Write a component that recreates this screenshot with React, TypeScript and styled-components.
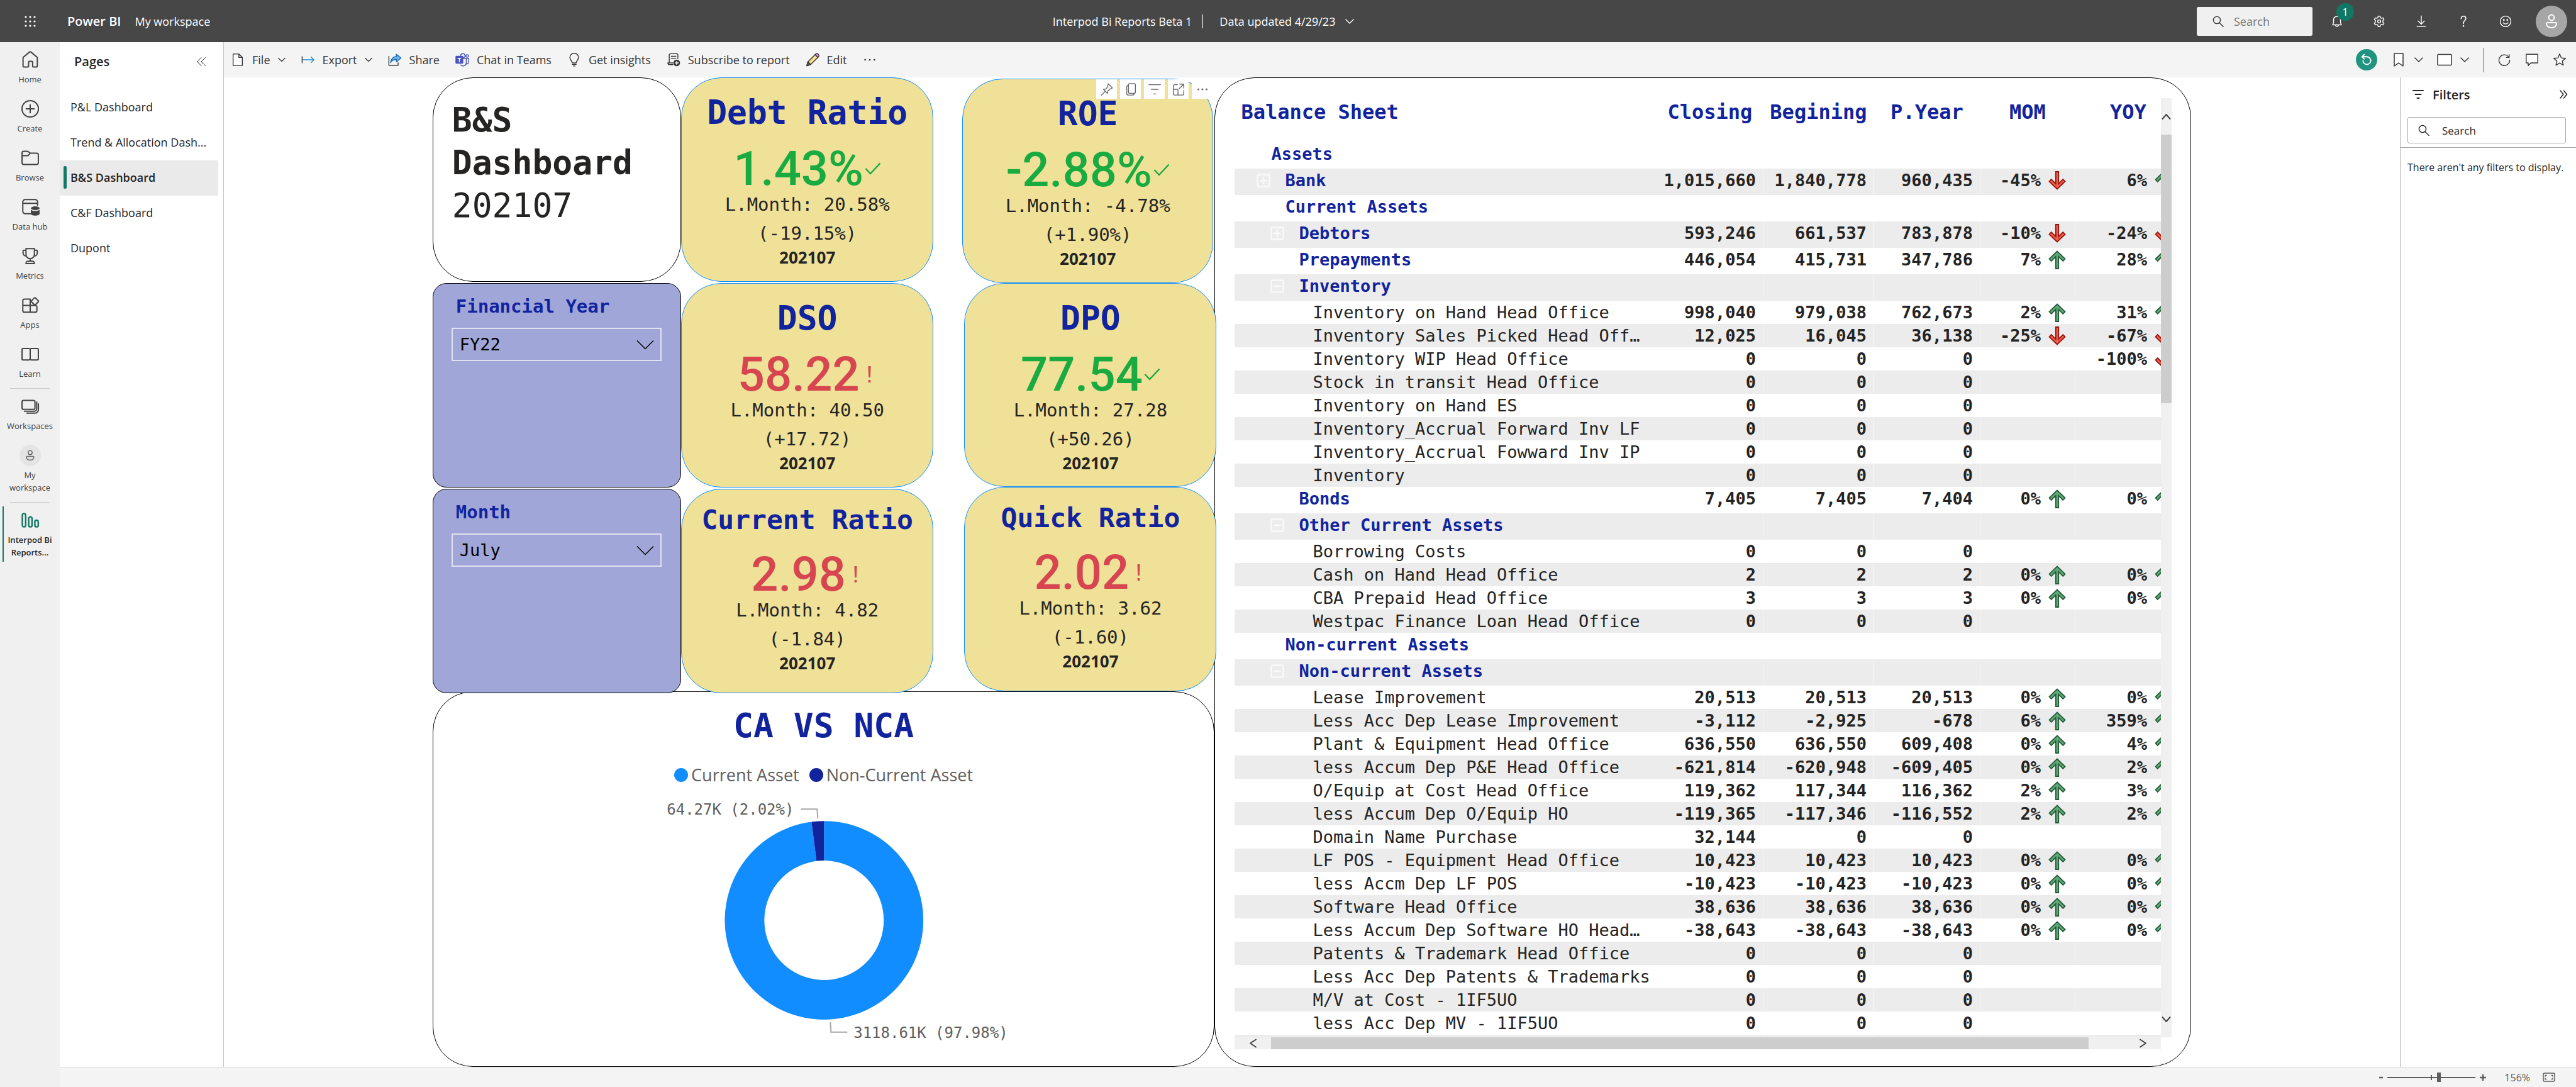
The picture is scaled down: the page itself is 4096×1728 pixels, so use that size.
import React from "react";
import styled, { createGlobalStyle, css } from "styled-components";

const ui = `"Open Sans", "Noto Sans", sans-serif`;
const mono = `"DejaVu Sans Mono", "Liberation Mono", monospace`;
const navy = "#12239e";
const ink = "#252423";
const green = "#1aab40";
const red = "#d64550";
const blue = "#118dff";

const GlobalStyle = createGlobalStyle`
  *, *::before, *::after { box-sizing: border-box; }
  html, body, #root { height: 100%; }
  body { margin: 0; overflow: hidden; background: #fff; color: ${ink}; font-family: ${ui}; font-size: 18px; }
  button, input, select { font: inherit; color: inherit; }
  button { border: 0; padding: 0; background: none; cursor: pointer; }
  a { color: inherit; text-decoration: none; }
  svg { display: block; flex: none; }
`;

/* ---------- icons ---------- */

type IconProps = {
  size?: number;
  width?: number;
  box?: string;
  stroke?: number;
  children: React.ReactNode;
};

const Icon = ({ size = 22, width, box = "0 0 24 24", stroke = 1.5, children }: IconProps) => (
  <svg
    width={width ?? size}
    height={size}
    viewBox={box}
    fill="none"
    stroke="currentColor"
    strokeWidth={stroke}
    strokeLinecap="round"
    strokeLinejoin="round"
    aria-hidden="true"
  >
    {children}
  </svg>
);

const ChevronDown = ({ size = 12, stroke = 1.2 }: { size?: number; stroke?: number }) => (
  <Icon size={size} box="0 0 12 12" stroke={stroke}>
    <path d="M.8 3.5 6 8.5l5.2-5" />
  </Icon>
);

const SearchIcon = () => (
  <Icon size={18} box="0 0 18 18" stroke={1.4}>
    <circle cx="7" cy="7" r="5.6" />
    <path d="m11 11.2 6 6" />
  </Icon>
);

const Person = ({ size = 30 }: { size?: number }) => (
  <Icon size={size} box="0 0 30 30" stroke={2}>
    <circle cx="15" cy="9" r="4.4" />
    <path d="M8.5 17h13a1.6 1.6 0 0 1 1.6 1.7c-.4 4-3.8 6.3-8.1 6.3s-7.7-2.3-8.1-6.3A1.6 1.6 0 0 1 8.5 17Z" />
  </Icon>
);

const railIcons = {
  home: (
    <Icon size={32}>
      <path d="M3.5 9.9a1.5 1.5 0 0 1 .5-1.1l7-5.9a1.5 1.5 0 0 1 2 0l7 5.900a1.5 1.5 0 0 1 .5 1.100v9.700a1 1 0 0 1-1 1h-3.600a1 1 0 0 1-1-1v-4.800a1 1 0 0 0-1-1h-2.800a1 1 0 0 0-1 1v4.800a1 1 0 0 1-1 1H4.500a1 1 0 0 1-1-1Z" />
    </Icon>
  ),
  create: (
    <Icon size={32}>
      <circle cx="12" cy="12" r="9.8" />
      <path d="M12 7.3v9.400M7.300 12h9.400" />
    </Icon>
  ),
  browse: (
    <Icon size={32}>
      <path d="M2.3 6.2a2 2 0 0 1 2-2h4.200c.5 0 1 .2 1.400.5l2.100 1.700h7.700a2 2 0 0 1 2 2v9.400a2 2 0 0 1-2 2H4.300a2 2 0 0 1-2-2ZM2.300 9.400h6.200c.5 0 1-.2 1.400-.5L12 6.500" />
    </Icon>
  ),
  hub: (
    <Icon size={32}>
      <path d="M12.5 20H6a2.8 2.8 0 0 1-2.800-2.800V6A2.800 2.800 0 0 1 6 3.200h12A2.800 2.800 0 0 1 20.800 6v4M3.200 7.700h17.600" />
      <g fill="currentColor" stroke="none">
        <ellipse cx="18" cy="13.5" rx="5.2" ry="2.2" />
        <path d="M12.8 15.300c2.200 1.900 8.200 1.900 10.400 0v4.800c0 1.400-2.300 2.300-5.200 2.300s-5.200-.9-5.200-2.300Z" />
      </g>
    </Icon>
  ),
  metrics: (
    <Icon size={32}>
      <path d="M7 3.2h10v7a5 5 0 0 1-10 0ZM7 5H4.500a1 1 0 0 0-1 1v2.500A3.500 3.500 0 0 0 7 12M17 5h2.500a1 1 0 0 1 1 1v2.500A3.500 3.500 0 0 1 17 12M12 15.200v3M7 21v-.6a2.200 2.200 0 0 1 2.200-2.200h5.600a2.200 2.200 0 0 1 2.200 2.200v.6Z" />
    </Icon>
  ),
  apps: (
    <Icon size={32}>
      <path d="M12 4.8H5.200a2 2 0 0 0-2 2V18.500a2 2 0 0 0 2 2H18a2 2 0 0 0 2-2v-4.200a2 2 0 0 0-2-2H3.200M12 4.800v15.700" />
      <path d="m16.9 3.500-3.200 3.300a1 1 0 0 0 0 1.400l3.200 3.200a1 1 0 0 0 1.400 0l3.300-3.200a1 1 0 0 0 0-1.400l-3.300-3.300a1 1 0 0 0-1.400 0Z" />
    </Icon>
  ),
  learn: (
    <Icon size={32}>
      <path d="M12 6.200a1.700 1.700 0 0 0-1.500-.9H3.600a1.300 1.300 0 0 0-1.300 1.300v11a1.300 1.300 0 0 0 1.300 1.300h6.900a1.700 1.700 0 0 0 1.500-.9 1.700 1.700 0 0 0 1.500.9h6.900a1.300 1.300 0 0 0 1.300-1.300v-11a1.300 1.300 0 0 0-1.300-1.300h-6.900a1.700 1.700 0 0 0-1.500.9ZM12 6.200v11.800" />
    </Icon>
  ),
  workspaces: (
    <Icon size={32}>
      <rect x="2.3" y="4.8" width="15.4" height="10.8" rx="1.8" />
      <path d="M19.8 6.800v8a3 3 0 0 1-3 3H5M21.800 9v7a4 4 0 0 1-4 4H8" />
    </Icon>
  ),
  report: (
    <Icon size={32} stroke={1.8}>
      <rect x="2.6" y="4" width="4" height="16" rx="2" />
      <rect x="10.2" y="8" width="4" height="12" rx="2" />
      <rect x="17.6" y="12" width="4" height="8" rx="2" />
    </Icon>
  ),
};

/* ---------- top bar ---------- */

const Shell = styled.div`
  display: flex;
  flex-direction: column;
  height: 100vh;
`;

const TopBar = styled.header`
  flex: none;
  display: flex;
  align-items: center;
  justify-content: space-between;
  height: 67px;
  background: #474747;
  color: #fff;
`;

const BarGroup = styled.div`
  display: flex;
  align-items: center;
`;

const Waffle = styled.button`
  display: grid;
  place-items: center;
  width: 95px;
  height: 67px;
`;

const Brand = styled.a`
  margin: 0 22px 0 12px;
  font-size: 20px;
  font-weight: 600;
`;

const ReportTitle = styled.button`
  display: flex;
  align-items: center;
  gap: 16px;
`;

const TitleRule = styled.span`
  width: 2px;
  height: 22px;
  margin-right: 10px;
  background: #b5b5b5;
`;

const TopSearch = styled.label`
  display: flex;
  align-items: center;
  gap: 16px;
  width: 184px;
  height: 46px;
  margin-right: 6px;
  padding: 0 25px;
  border-radius: 3px;
  background: #f0f0f0;
  color: #333;
`;

const BareInput = styled.input`
  min-width: 0;
  flex: 1;
  border: 0;
  padding: 0;
  outline: 0;
  background: none;
  &::placeholder { color: #767676; opacity: 1; }
`;

const TopIcon = styled.button`
  position: relative;
  display: grid;
  place-items: center;
  width: 67px;
  height: 67px;
`;

const Badge = styled.span`
  position: absolute;
  top: 5px;
  left: 32px;
  display: grid;
  place-items: center;
  width: 28px;
  height: 28px;
  border-radius: 50%;
  background: #117865;
  font-size: 16px;
`;

const Avatar = styled.button`
  display: grid;
  place-items: center;
  width: 50px;
  height: 50px;
  margin: 0 14px;
  border-radius: 50%;
  background: #a6a6a6;
`;

/* ---------- left rail ---------- */

const Body = styled.div`
  flex: 1;
  display: flex;
  min-height: 0;
`;

const Rail = styled.nav`
  flex: none;
  width: 95px;
  background: #f0f0f0;
  color: #424242;
`;

const RailLink = styled.a<{ $active?: boolean }>`
  display: flex;
  flex-direction: column;
  align-items: center;
  gap: 4px;
  padding: 11px 4px 9px;
  font-size: 13px;
  line-height: 20px;
  text-align: center;
  ${(p) =>
    p.$active &&
    css`
      margin-top: 6px;
      padding: 5px 4px;
      box-shadow: inset 4px 0 #f0f0f0, inset 6px 0 #117865;
      font-weight: 600;
      color: ${ink};
    `}
`;

const RailGlyph = styled.span<{ $accent?: boolean }>`
  display: grid;
  place-items: center;
  height: 34px;
  color: ${(p) => (p.$accent ? "#117865" : "inherit")};
`;

const RailAvatar = styled.span`
  display: grid;
  place-items: center;
  width: 34px;
  height: 34px;
  border-radius: 50%;
  background: #e4e4e4;
  color: #666;
`;

const RailRule = styled.hr`
  width: 63px;
  height: 1px;
  margin: 4px auto 0;
  border: 0;
  background: #c8c8c8;
`;

/* ---------- pages pane ---------- */

const Workspace = styled.div`
  flex: 1;
  display: flex;
  flex-direction: column;
  min-width: 0;
`;

const Main = styled.div`
  flex: 1;
  display: flex;
  min-height: 0;
`;

const PagesPane = styled.aside`
  flex: none;
  width: 261px;
  border-right: 1px solid #c8c6c4;
`;

const PagesHead = styled.div`
  display: flex;
  align-items: center;
  justify-content: space-between;
  height: 61px;
  margin-bottom: 15px;
  padding: 0 27px 0 23px;
`;

const PaneTitle = styled.h2`
  margin: 0;
  font-size: 20px;
  font-weight: 600;
`;

const PageButton = styled.button<{ $active?: boolean }>`
  display: flex;
  align-items: center;
  gap: 6px;
  width: 252px;
  height: 56px;
  padding: 0 0 2px 6px;
  white-space: nowrap;
  background: ${(p) => (p.$active ? "#eaeaea" : "none")};
  font-weight: ${(p) => (p.$active ? 600 : 400)};
  &::before {
    content: "";
    width: 5px;
    height: 36px;
    border-radius: 2px;
    background: ${(p) => (p.$active ? "#117865" : "none")};
  }
`;

/* ---------- report toolbar ---------- */

const Center = styled.div`
  flex: 1;
  display: flex;
  flex-direction: column;
  min-width: 0;
`;

const ToolBar = styled.div`
  flex: none;
  display: flex;
  align-items: center;
  justify-content: space-between;
  height: 56px;
  padding: 0 15px 0 11px;
  background: #f4f4f4;
  color: #333;
`;

const ToolGroup = styled.div<{ $gap: number }>`
  display: flex;
  align-items: center;
  gap: ${(p) => p.$gap}px;
`;

const Tool = styled.button`
  display: flex;
  align-items: center;
  gap: 12px;
`;

const ResetButton = styled.button`
  display: grid;
  place-items: center;
  width: 34px;
  height: 34px;
  border-radius: 50%;
  background: #21947f;
  color: #fff;
`;

const PairTool = styled.button`
  display: flex;
  align-items: center;
  gap: 13px;
`;

const ToolRule = styled.span`
  width: 1px;
  height: 39px;
  background: #777;
`;

/* ---------- canvas ---------- */

const Split = styled.div`
  flex: 1;
  display: flex;
  min-height: 0;
`;

const Canvas = styled.main`
  flex: 1;
  display: flex;
  justify-content: center;
  min-width: 0;
  overflow: hidden;
`;

const Report = styled.div`
  display: grid;
  grid-template-columns: 1243fr 1552fr;
  height: 100%;
  aspect-ratio: 16 / 9;
`;

const LeftHalf = styled.div`
  display: grid;
  grid-template-rows: 976fr 597fr;
  min-width: 0;
  min-height: 0;
`;

const CardColumns = styled.div`
  position: relative;
  z-index: 1;
  display: grid;
  grid-template-columns: 395fr 401fr 450fr;
  margin-right: -3px;
  min-height: 0;
`;

const Column = styled.div<{ $offset?: boolean }>`
  display: grid;
  grid-template-rows: repeat(3, 1fr);
  min-width: 0;
  min-height: 0;
  ${(p) =>
    p.$offset
      ? css`
          padding: 2px 0 0 46px;
        `
      : css`
          row-gap: 2px;
          margin-bottom: -3px;
        `}
`;

const Card = styled.section`
  min-width: 0;
  min-height: 0;
  border: 1px solid #000;
  border-radius: 64px;
  background: #fff;
`;

const TitleCard = styled(Card)`
  padding: 33px 30px;
  font-family: ${mono};
  font-size: 53px;
  line-height: 68px;
`;

const TitleText = styled.h1`
  margin: 0;
  font: inherit;
  font-weight: 700;
`;

const SlicerCard = styled(Card)`
  padding: 18px 30px 0 29px;
  border-radius: 22px;
  background: #a0a6d8;
  font-family: ${mono};
`;

const SlicerLabel = styled.label`
  display: block;
  margin: 0 0 16px 7px;
  font-size: 29px;
  font-weight: 700;
  line-height: 36px;
  color: ${navy};
`;

const SelectBox = styled.div`
  display: grid;
  align-items: center;
  & > * { grid-area: 1 / 1; }
  & > svg { justify-self: end; margin-right: 12px; pointer-events: none; }
`;

const Select = styled.select`
  width: 100%;
  height: 53px;
  padding: 0 48px 0 11px;
  border: 2px solid #e1e2f1;
  border-radius: 0;
  appearance: none;
  background: none;
  font-family: ${mono};
  font-size: 27px;
  color: #000;
`;

const KpiCard = styled(Card)<{ $narrow?: boolean }>`
  position: relative;
  display: flex;
  flex-direction: column;
  align-items: center;
  justify-self: ${(p) => (p.$narrow ? "start" : "end")};
  width: ${(p) => (p.$narrow ? "399px" : "401px")};
  padding-top: 23px;
  border-color: ${blue};
  background: #f0e199;
  font-family: ${mono};
`;

const KpiTitle = styled.h3<{ $small?: boolean }>`
  margin: 0 0 ${(p) => (p.$small ? 28 : 23)}px;
  font-size: ${(p) => (p.$small ? 43 : 53)}px;
  line-height: ${(p) => (p.$small ? 50 : 64)}px;
  color: ${navy};
  white-space: nowrap;
`;

const KpiValue = styled.div<{ $good: boolean }>`
  display: flex;
  align-items: center;
  gap: 2px;
  font-family: Roboto, ${ui};
  font-size: 76px;
  font-weight: 500;
  line-height: 68px;
  color: ${(p) => (p.$good ? green : red)};
`;

const KpiLine = styled.div`
  font-size: 29px;
  line-height: 46px;
`;

const KpiDate = styled.div`
  font-family: ${ui};
  font-size: 26px;
  font-weight: 700;
  line-height: 30px;
`;

const HoverTools = styled.div`
  position: absolute;
  top: 0;
  right: 0;
  display: flex;
  gap: 5px;
`;

const HoverTool = styled.button`
  display: grid;
  place-items: center;
  width: 33px;
  height: 31px;
  background: #fff;
  color: #666;
`;

/* ---------- chart ---------- */

const ChartCard = styled(Card)`
  display: flex;
  flex-direction: column;
  align-items: center;
  padding-top: 22px;
`;

const ChartTitle = styled.h3`
  margin: 0 0 26px;
  font-family: ${mono};
  font-size: 53px;
  line-height: 64px;
  color: ${navy};
`;

const Legend = styled.ul`
  display: flex;
  gap: 16px;
  margin: 0;
  padding: 0;
  list-style: none;
  font-size: 27px;
  line-height: 40px;
  color: #605e5c;
`;

const LegendItem = styled.li<{ $color: string }>`
  display: flex;
  align-items: center;
  gap: 5px;
  &::before {
    content: "";
    width: 22px;
    height: 22px;
    border-radius: 50%;
    background: ${(p) => p.$color};
  }
`;

const Donut = styled.svg`
  width: 100%;
  height: 420px;
  font-family: ${mono};
  font-size: 24px;
`;

/* ---------- table ---------- */

const TableCard = styled(Card)`
  display: grid;
  grid-template-columns: minmax(0, 1fr) 17px;
  grid-template-rows: minmax(0, 1fr) 19px;
  padding: 32px 30px 27px 31px;
`;

const TableView = styled.div`
  overflow: hidden;
`;

const Table = styled.table`
  width: 1505px;
  border-collapse: collapse;
  table-layout: fixed;
  font-family: ${mono};
  font-size: 27px;
  line-height: 37px;
`;

const HeadCell = styled.th<{ $first?: boolean }>`
  height: 70px;
  padding: 0 0 0 ${(p) => (p.$first ? 10 : 0)}px;
  vertical-align: top;
  text-align: ${(p) => (p.$first ? "left" : "center")};
  font-size: 32px;
  line-height: 45px;
  color: ${navy};
`;

const Row = styled.tr<{ $shade: boolean; $group: boolean }>`
  height: ${(p) => (p.$group ? 42 : 37)}px;
  background: ${(p) => (p.$shade ? "#ececec" : "#fff")};
`;

const NameCell = styled.th<{ $level: number; $group: boolean }>`
  padding: 0 0 0 ${(p) => 13 + p.$level * 22}px;
  vertical-align: top;
  text-align: left;
  white-space: nowrap;
  font-weight: ${(p) => (p.$group ? 700 : 400)};
  color: ${(p) => (p.$group ? navy : ink)};
`;

const NameFlow = styled.span`
  display: flex;
  align-items: center;
  gap: 23px;
`;

const Toggle = styled.button<{ $hidden: boolean }>`
  width: 22px;
  height: 22px;
  visibility: ${(p) => (p.$hidden ? "hidden" : "visible")};
  color: #f9f9f9;
`;

const NumCell = styled.td`
  padding: 0 11px 0 0;
  border-right: 1px solid rgba(255, 255, 255, 0.5);
  vertical-align: top;
  text-align: right;
  font-weight: 700;
`;

const TrendFlow = styled.span`
  display: flex;
  align-items: center;
  justify-content: flex-end;
  gap: 12px;
  height: 37px;
  padding-right: 3px;
`;

const ScrollTrack = styled.div<{ $vertical?: boolean }>`
  display: flex;
  flex-direction: ${(p) => (p.$vertical ? "column" : "row")};
  justify-content: space-between;
  background: #f0f0f0;
  color: #444;
`;

const ScrollButton = styled.button`
  display: grid;
  place-items: center;
  flex: 0 0 58px;
`;

const ScrollThumb = styled.div<{ $vertical?: boolean }>`
  flex: ${(p) => (p.$vertical ? "0 0 427px" : "0 0 1300px")};
  margin-${(p) => (p.$vertical ? "bottom" : "right")}: auto;
  background: #cdcdcd;
`;

/* ---------- filters pane ---------- */

const FiltersPane = styled.aside`
  flex: none;
  width: 280px;
  border-left: 1px solid #b3b0ad;
`;

const FiltersHead = styled.div`
  display: flex;
  align-items: center;
  gap: 14px;
  height: 54px;
  margin-bottom: 9px;
  padding: 0 13px 0 19px;
  & > button { margin-left: auto; }
`;

const FilterSearch = styled.label`
  display: flex;
  align-items: center;
  gap: 20px;
  height: 42px;
  margin: 0 16px 6px 11px;
  padding: 0 16px;
  border: 1px solid #a8a8a8;
  border-radius: 3px;
  font-size: 17px;
  & input::placeholder { color: ${ink}; }
`;

const FilterNote = styled.p`
  margin: 0;
  padding: 19px 11px;
  border-top: 1px solid #a8a8a8;
  font-size: 16px;
  line-height: 24px;
  white-space: nowrap;
`;

/* ---------- status bar ---------- */

const StatusBar = styled.footer`
  flex: none;
  display: flex;
  align-items: center;
  justify-content: flex-end;
  height: 32px;
  padding-right: 33px;
  border-top: 1px solid #dcdcdc;
  background: #f4f4f4;
  color: #605e5c;
  font-size: 16px;
`;

const ZoomStep = styled.button`
  margin: 0 6px;
`;

const ZoomRange = styled.input`
  width: 140px;
  height: 16px;
  margin: 0;
  appearance: none;
  background:
    linear-gradient(#605e5c, #605e5c) 50% 50% / 2px 8px no-repeat,
    linear-gradient(#605e5c, #605e5c) 0 50% / 100% 2px no-repeat;
  &::-webkit-slider-thumb {
    appearance: none;
    width: 6px;
    height: 15px;
    background: #605e5c;
  }
`;

const ZoomValue = styled.span`
  margin: 0 20px 0 22px;
`;

/* ---------- data ---------- */

const railItems = [
  { icon: railIcons.home, label: "Home" },
  { icon: railIcons.create, label: "Create" },
  { icon: railIcons.browse, label: "Browse" },
  { icon: railIcons.hub, label: "Data hub" },
  { icon: railIcons.metrics, label: "Metrics" },
  { icon: railIcons.apps, label: "Apps" },
  { icon: railIcons.learn, label: "Learn" },
];

const pages = ["P&L Dashboard", "Trend & Allocation Dash...", "B&S Dashboard", "C&F Dashboard", "Dupont"];

type Kpi = { title: string; value: string; good: boolean; last: string; diff: string; small?: boolean };

const kpisLeft: Kpi[] = [
  { title: "Debt Ratio", value: "1.43%", good: true, last: "20.58%", diff: "(-19.15%)" },
  { title: "DSO", value: "58.22", good: false, last: "40.50", diff: "(+17.72)" },
  { title: "Current Ratio", value: "2.98", good: false, last: "4.82", diff: "(-1.84)", small: true },
];

const kpisRight: Kpi[] = [
  { title: "ROE", value: "-2.88%", good: true, last: "-4.78%", diff: "(+1.90%)" },
  { title: "DPO", value: "77.54", good: true, last: "27.28", diff: "(+50.26)" },
  { title: "Quick Ratio", value: "2.02", good: false, last: "3.62", diff: "(-1.60)", small: true },
];

type Line = {
  name: string;
  level: number;
  group?: boolean;
  toggle?: "plus" | "minus";
  nums?: string[];
  mom?: string;
  yoy?: string;
};

const g = (name: string, level: number, toggle?: "plus" | "minus", nums?: string[], mom?: string, yoy?: string): Line => ({
  name, level, group: true, toggle, nums, mom, yoy,
});
const r = (name: string, nums: string[], mom?: string, yoy?: string): Line => ({ name, level: 3, nums, mom, yoy });
const zero = ["0", "0", "0"];

const lines: Line[] = [
  g("Assets", 0),
  g("Bank", 1, "plus", ["1,015,660", "1,840,778", "960,435"], "-45%", "6%"),
  g("Current Assets", 1),
  g("Debtors", 2, "plus", ["593,246", "661,537", "783,878"], "-10%", "-24%"),
  g("Prepayments", 2, undefined, ["446,054", "415,731", "347,786"], "7%", "28%"),
  g("Inventory", 2, "minus"),
  r("Inventory on Hand Head Office", ["998,040", "979,038", "762,673"], "2%", "31%"),
  r("Inventory Sales Picked Head Off…", ["12,025", "16,045", "36,138"], "-25%", "-67%"),
  r("Inventory WIP Head Office", zero, undefined, "-100%"),
  r("Stock in transit Head Office", zero),
  r("Inventory on Hand ES", zero),
  r("Inventory_Accrual Forward Inv LF", zero),
  r("Inventory_Accrual Fowward Inv IP", zero),
  r("Inventory", zero),
  g("Bonds", 2, undefined, ["7,405", "7,405", "7,404"], "0%", "0%"),
  g("Other Current Assets", 2, "minus"),
  r("Borrowing Costs", zero),
  r("Cash on Hand Head Office", ["2", "2", "2"], "0%", "0%"),
  r("CBA Prepaid Head Office", ["3", "3", "3"], "0%", "0%"),
  r("Westpac Finance Loan Head Office", zero),
  g("Non-current Assets", 1),
  g("Non-current Assets", 2, "minus"),
  r("Lease Improvement", ["20,513", "20,513", "20,513"], "0%", "0%"),
  r("Less Acc Dep Lease Improvement", ["-3,112", "-2,925", "-678"], "6%", "359%"),
  r("Plant & Equipment Head Office", ["636,550", "636,550", "609,408"], "0%", "4%"),
  r("less Accum Dep P&E Head Office", ["-621,814", "-620,948", "-609,405"], "0%", "2%"),
  r("O/Equip at Cost Head Office", ["119,362", "117,344", "116,362"], "2%", "3%"),
  r("less Accum Dep O/Equip HO", ["-119,365", "-117,346", "-116,552"], "2%", "2%"),
  r("Domain Name Purchase", ["32,144", "0", "0"]),
  r("LF POS - Equipment Head Office", ["10,423", "10,423", "10,423"], "0%", "0%"),
  r("less Accm Dep LF POS", ["-10,423", "-10,423", "-10,423"], "0%", "0%"),
  r("Software Head Office", ["38,636", "38,636", "38,636"], "0%", "0%"),
  r("Less Accum Dep Software HO Head…", ["-38,643", "-38,643", "-38,643"], "0%", "0%"),
  r("Patents & Trademark Head Office", zero),
  r("Less Acc Dep Patents & Trademarks", zero),
  r("M/V at Cost - 1IF5UO", zero),
  r("less Acc Dep MV - 1IF5UO", zero),
  r("", ["", "", ""]),
];

/* ---------- parts ---------- */

const TrendArrow = ({ down }: { down: boolean }) => (
  <svg width="28" height="30" viewBox="0 0 28 30" aria-hidden="true">
    <path
      d="M14 1.5 26.5 13.5 23.3 17 16.2 9.800V29h-4.400V9.800L4.700 17 1.500 13.500Z"
      transform={down ? "rotate(180 14 15)" : undefined}
      fill={down ? "#f2604f" : "#62ab79"}
      stroke={down ? "#98140a" : "#245c39"}
      strokeWidth="1.8"
    />
  </svg>
);

const Trend = ({ value }: { value?: string }) =>
  value ? (
    <TrendFlow>
      {value}
      <TrendArrow down={value.startsWith("-")} />
    </TrendFlow>
  ) : null;

const KpiTile = ({ kpi, narrow, children }: { kpi: Kpi; narrow?: boolean; children?: React.ReactNode }) => (
  <KpiCard $narrow={narrow}>
    <KpiTitle $small={kpi.small}>{kpi.title}</KpiTitle>
    <KpiValue $good={kpi.good}>
      {kpi.value}
      {kpi.good ? (
        <Icon size={26} box="0 0 26 26" stroke={2.5}>
          <path d="m1.5 13 7.500 8L24.500 4.500" strokeLinecap="butt" strokeLinejoin="miter" />
        </Icon>
      ) : (
        <svg width="26" height="26" viewBox="0 0 26 26" fill="currentColor" aria-hidden="true">
          <path d="M11.5 0h4l-.6 18h-2.800ZM11.700 22h3.600v4h-3.600Z" />
        </svg>
      )}
    </KpiValue>
    <KpiLine>L.Month: {kpi.last}</KpiLine>
    <KpiLine>{kpi.diff}</KpiLine>
    <KpiDate>202107</KpiDate>
    {children}
  </KpiCard>
);

const Slicer = ({ id, label, value }: { id: string; label: string; value: string }) => (
  <SlicerCard>
    <SlicerLabel htmlFor={id}>{label}</SlicerLabel>
    <SelectBox>
      <Select id={id} defaultValue={value}>
        <option>{value}</option>
      </Select>
      <svg width="28" height="16" viewBox="0 0 28 16" fill="none" stroke="#000" strokeWidth="1.5" aria-hidden="true">
        <path d="M1 1.5 14 14.500 27 1.500" />
      </svg>
    </SelectBox>
  </SlicerCard>
);

const ring = (from: number, to: number, cx: number, cy: number, outer: number, inner: number) => {
  const at = (a: number, rad: number) => {
    const t = (a - 0.25) * Math.PI * 2;
    return `${(cx + rad * Math.cos(t)).toFixed(2)} ${(cy + rad * Math.sin(t)).toFixed(2)}`;
  };
  const big = to - from > 0.5 ? 1 : 0;
  return `M${at(from, outer)}A${outer} ${outer} 0 ${big} 1 ${at(to, outer)}L${at(to, inner)}A${inner} ${inner} 0 ${big} 0 ${at(from, inner)}Z`;
};

const AssetDonut = () => (
  <Donut viewBox="0 0 1243 420" role="img" aria-label="Current Asset against Non-Current Asset">
    <path d={ring(0, 0.9798, 622, 211, 158, 95)} fill={blue} />
    <path d={ring(0.9798, 1, 622, 211, 158, 95)} fill={navy} />
    <g fill="none" stroke="#a6a6a6" strokeWidth="2">
      <path d="M585 34h26l1 15" />
      <path d="M632 373l1 16h26" />
    </g>
    <g fill="#605e5c">
      <text x="574" y="43" textAnchor="end">64.27K (2.02%)</text>
      <text x="669" y="398">3118.61K (97.98%)</text>
    </g>
  </Donut>
);

const BalanceTable = () => (
  <Table>
    <colgroup>
      <col width="671" />
      <col width="169" />
      <col width="176" />
      <col width="169" />
      <col width="151" />
      <col width="169" />
    </colgroup>
    <thead>
      <tr>
        <HeadCell $first scope="col">Balance Sheet</HeadCell>
        {["Closing", "Begining", "P.Year", "MOM", "YOY"].map((h) => (
          <HeadCell key={h} scope="col">{h}</HeadCell>
        ))}
      </tr>
    </thead>
    <tbody>
      {lines.map((line, i) => (
        <Row key={i} $shade={i % 2 === 1} $group={!!line.group}>
          <NameCell scope="row" $level={line.level} $group={!!line.group}>
            <NameFlow>
              <Toggle $hidden={!line.toggle} aria-label={line.toggle === "plus" ? "Expand" : "Collapse"}>
                <Icon size={22} box="0 0 22 22" stroke={2.5}>
                  <rect x="1.5" y="1.5" width="19" height="19" rx="2" />
                  <path d={line.toggle === "plus" ? "M11 6v10M6 11h10" : "M6 11h10"} />
                </Icon>
              </Toggle>
              {line.name}
            </NameFlow>
          </NameCell>
          {(line.nums ?? ["", "", ""]).map((n, k) => (
            <NumCell key={k}>{n}</NumCell>
          ))}
          <NumCell><Trend value={line.mom} /></NumCell>
          <NumCell><Trend value={line.yoy} /></NumCell>
        </Row>
      ))}
    </tbody>
  </Table>
);

export default function App() {
  return (
    <Shell>
      <GlobalStyle />
      <TopBar>
        <BarGroup>
          <Waffle aria-label="App launcher">
            <svg width="18" height="18" viewBox="0 0 18 18" fill="#fff" aria-hidden="true">
              {[2, 9, 16].map((y) => [2, 9, 16].map((x) => <circle key={`${x}-${y}`} cx={x} cy={y} r="1.6" />))}
            </svg>
          </Waffle>
          <Brand href="#">Power BI</Brand>
          <a href="#">My workspace</a>
        </BarGroup>
        <ReportTitle>
          <span>Interpod Bi Reports Beta 1</span>
          <TitleRule />
          <span>Data updated 4/29/23</span>
          <ChevronDown size={14} />
        </ReportTitle>
        <BarGroup>
          <TopSearch>
            <SearchIcon />
            <BareInput placeholder="Search" aria-label="Search" />
          </TopSearch>
          <TopIcon aria-label="Notifications">
            <Icon>
              <path d="M12 3.500c-3.800 0-6 2.600-6 6v4.700L4.300 18h15.400L18 14.200V9.500c0-3.400-2.200-6-6-6ZM9.500 18.300a2.500 2.500 0 0 0 5 0" />
            </Icon>
            <Badge>1</Badge>
          </TopIcon>
          <TopIcon aria-label="Settings">
            <Icon>
              <circle cx="12" cy="12" r="2.6" />
              <path d="M10.3 3h3.400l.6 2.700 1.800 1 2.600-.9 1.700 3-2 1.900v2.600l2 1.900-1.700 3-2.600-.9-1.800 1-.6 2.700h-3.400l-.6-2.700-1.800-1-2.600.9-1.700-3 2-1.900v-2.600l-2-1.900 1.700-3 2.600.9 1.800-1Z" />
            </Icon>
          </TopIcon>
          <TopIcon aria-label="Download">
            <Icon>
              <path d="M12 2.500v14M6.500 11.300 12 16.800l5.500-5.500M4.500 20.500h15" />
            </Icon>
          </TopIcon>
          <TopIcon aria-label="Help">
            <Icon stroke={1.8}>
              <path d="M8 7.300C8 4.500 9.700 3 12.100 3s4.100 1.500 4.100 3.900c0 3.700-4.200 3.900-4.200 8.100v.8" />
              <circle cx="12" cy="20" r=".6" fill="currentColor" />
            </Icon>
          </TopIcon>
          <TopIcon aria-label="Feedback">
            <Icon>
              <circle cx="12" cy="12" r="9.2" />
              <path d="M7.800 14.300c1.900 3 6.500 3 8.400 0" />
              <g fill="currentColor">
                <circle cx="9" cy="9.5" r=".8" />
                <circle cx="15" cy="9.5" r=".8" />
              </g>
            </Icon>
          </TopIcon>
          <Avatar aria-label="Account">
            <Person />
          </Avatar>
        </BarGroup>
      </TopBar>

      <Body>
        <Rail>
          {railItems.map((it) => (
            <RailLink key={it.label} href="#">
              <RailGlyph>{it.icon}</RailGlyph>
              {it.label}
            </RailLink>
          ))}
          <RailRule />
          <RailLink href="#">
            <RailGlyph>{railIcons.workspaces}</RailGlyph>
            Workspaces
          </RailLink>
          <RailLink href="#">
            <RailAvatar><Person size={22} /></RailAvatar>
            <span>My<br />workspace</span>
          </RailLink>
          <RailRule />
          <RailLink href="#" $active>
            <RailGlyph $accent>{railIcons.report}</RailGlyph>
            <span>Interpod Bi<br />Reports...</span>
          </RailLink>
        </Rail>

        <Workspace>
          <Main>
            <PagesPane>
              <PagesHead>
                <PaneTitle>Pages</PaneTitle>
                <button aria-label="Collapse pages">
                  <Icon size={16} box="0 0 16 16" stroke={1}>
                    <path d="M8 1.500 1.500 8 8 14.500M14.500 1.500 8 8l6.500 6.500" />
                  </Icon>
                </button>
              </PagesHead>
              {pages.map((p) => (
                <PageButton key={p} $active={p === "B&S Dashboard"}>{p}</PageButton>
              ))}
            </PagesPane>

            <Center>
              <ToolBar>
                <ToolGroup $gap={25}>
                  <Tool>
                    <Icon><path d="M4 2h10l6 6v14H4ZM14 2v6h6" fill="#fff" /></Icon>
                    File
                    <ChevronDown />
                  </Tool>
                  <Tool>
                    <Icon>
                      <path d="M1.500 6.500v11" />
                      <path d="M3 12h19M17 7l5 5-5 5" stroke="#1f87d0" />
                    </Icon>
                    Export
                    <ChevronDown />
                  </Tool>
                  <Tool>
                    <Icon>
                      <path d="M1.500 6v15.500h16V17" />
                      <path d="M14.500 2.500 22.500 9l-8 6.500v-4C10 11.500 6.500 13 4.500 17c.5-6 4-10.500 10-10.500Z" fill="#6fb3ea" stroke="#1467b3" />
                    </Icon>
                    Share
                  </Tool>
                  <Tool>
                    <Icon>
                      <g stroke="#4b53bc">
                        <circle cx="13" cy="5" r="3.7" />
                        <circle cx="20.5" cy="5.5" r="2.2" />
                        <path d="M12 9.500h7v7.500a5.500 5.500 0 0 1-9.500 4M19 9.500h4v6.500a4 4 0 0 1-4 3.500" />
                        <rect x="1" y="6" width="12" height="12" rx="1" fill="#4b53bc" />
                        <path d="M4.500 9.500h5M7 9.500v6" stroke="#fff" />
                      </g>
                    </Icon>
                    Chat in Teams
                  </Tool>
                  <Tool>
                    <Icon>
                      <path d="M8.500 17.500c0-4-4-5-4-9.500a7.500 7.500 0 0 1 15 0c0 4.500-4 5.500-4 9.500ZM8.500 20h7M10.500 22.800h3" />
                    </Icon>
                    Get insights
                  </Tool>
                  <Tool>
                    <Icon>
                      <path d="M11 20.500H5a3 3 0 0 1-3-3h9M4.500 17V4a2.500 2.500 0 0 1 2.500-2.500h10A2.500 2.500 0 0 1 19.500 4v6M8 6h8M8 10h8" />
                      <circle cx="17.5" cy="17.5" r="5.7" fill="#333" stroke="none" />
                      <path d="M17.500 14.700v5.600M14.700 17.500h5.600" stroke="#fff" />
                    </Icon>
                    Subscribe to report
                  </Tool>
                  <Tool>
                    <Icon>
                      <path d="M2 22.500 4 15.500 16.500 3l4.800 4.800L8.800 20.300Z" fill="#f8dc8c" />
                      <path d="m16.500 3 1-1a2.500 2.500 0 0 1 3.800 0l1 1a2.500 2.500 0 0 1 0 3.800l-1 1Z" fill="#d8a0d8" />
                      <path d="M2 22.500 4 15.500l4.800 4.800Z" fill="#555" />
                    </Icon>
                    Edit
                  </Tool>
                  <Tool aria-label="More options">
                    <Icon>
                      <g fill="currentColor" stroke="none">
                        <circle cx="4" cy="12" r="1.5" /><circle cx="12" cy="12" r="1.5" /><circle cx="20" cy="12" r="1.5" />
                      </g>
                    </Icon>
                  </Tool>
                </ToolGroup>
                <ToolGroup $gap={22}>
                  <ResetButton aria-label="Reset">
                    <Icon><path d="M8 3 4 6.800l4 3.700M4.300 6.800h8.200a6.700 6.700 0 1 1-6.700 6.700" stroke="#fff" strokeWidth="2" /></Icon>
                  </ResetButton>
                  <PairTool aria-label="Bookmarks">
                    <Icon size={24}><path d="M5 2h14v20l-7-5-7 5Z" fill="#fff" /></Icon>
                    <ChevronDown size={14} />
                  </PairTool>
                  <PairTool aria-label="View">
                    <Icon size={24}><rect x="1" y="3.5" width="22" height="17" rx="1" fill="#fff" /></Icon>
                    <ChevronDown size={14} />
                  </PairTool>
                  <ToolRule />
                  <Tool aria-label="Refresh">
                    <Icon><path d="M20.500 3v5h-5M20 8a9.300 9.300 0 1 0 1.300 4.500" /></Icon>
                  </Tool>
                  <Tool aria-label="Comment">
                    <Icon><path d="M2 2.500h20v15H10L5.500 22v-4.500H2Z" fill="#fff" /></Icon>
                  </Tool>
                  <Tool aria-label="Favorite">
                    <Icon><path d="m12 2 2.900 6.900 7.300.6-5.600 4.800 1.800 7.200L12 17.600l-6.400 3.900 1.800-7.200-5.600-4.800 7.300-.6Z" fill="#fff" /></Icon>
                  </Tool>
                </ToolGroup>
              </ToolBar>

              <Split>
                <Canvas>
                  <Report>
                    <LeftHalf>
                      <CardColumns>
                        <Column>
                          <TitleCard>
                            <TitleText>B&amp;S<br />Dashboard</TitleText>
                            202107
                          </TitleCard>
                          <Slicer id="year" label="Financial Year" value="FY22" />
                          <Slicer id="month" label="Month" value="July" />
                        </Column>
                        <Column>
                          {kpisLeft.map((k) => <KpiTile key={k.title} kpi={k} />)}
                        </Column>
                        <Column $offset>
                          {kpisRight.map((k, i) => (
                            <KpiTile key={k.title} kpi={k} narrow={i === 0}>
                              {i === 0 && (
                                <HoverTools>
                                  <HoverTool aria-label="Pin">
                                    <Icon><path d="m14.500 2.500 7 7-2 1.500-2.500.5-3.500 3.500-.5 4-7-7 4-.5 3.500-3.500.2-3ZM9.500 15 2.500 22" /></Icon>
                                  </HoverTool>
                                  <HoverTool aria-label="Copy">
                                    <Icon><rect x="8" y="2" width="12" height="17" rx="2" /><path d="M8 5a3 3 0 0 0-3 3v11a3 3 0 0 0 3 3h7a3 3 0 0 0 3-3" /></Icon>
                                  </HoverTool>
                                  <HoverTool aria-label="Filters">
                                    <Icon><path d="M2 4h20M6 12h12M10 20h4" /></Icon>
                                  </HoverTool>
                                  <HoverTool aria-label="Focus mode">
                                    <Icon><path d="M10 4H5a2 2 0 0 0-2 2v14a2 2 0 0 0 2 2h14a2 2 0 0 0 2-2v-6M14 3h7v7M21 3l-8 8M3 12h6a2 2 0 0 1 2 2v8" /></Icon>
                                  </HoverTool>
                                  <HoverTool aria-label="More options">
                                    <Icon>
                                      <g fill="currentColor" stroke="none">
                                        <circle cx="5" cy="12" r="1.7" /><circle cx="12" cy="12" r="1.7" /><circle cx="19" cy="12" r="1.7" />
                                      </g>
                                    </Icon>
                                  </HoverTool>
                                </HoverTools>
                              )}
                            </KpiTile>
                          ))}
                        </Column>
                      </CardColumns>
                      <ChartCard>
                        <ChartTitle>CA VS NCA</ChartTitle>
                        <Legend>
                          <LegendItem $color={blue}>Current Asset</LegendItem>
                          <LegendItem $color={navy}>Non-Current Asset</LegendItem>
                        </Legend>
                        <AssetDonut />
                      </ChartCard>
                    </LeftHalf>

                    <TableCard>
                      <TableView><BalanceTable /></TableView>
                      <ScrollTrack $vertical>
                        <ScrollButton aria-label="Scroll up">
                          <Icon size={17} box="0 0 17 17" stroke={2}><path d="m2.500 12 6-7 6 7" /></Icon>
                        </ScrollButton>
                        <ScrollThumb $vertical />
                        <ScrollButton aria-label="Scroll down">
                          <Icon size={17} box="0 0 17 17" stroke={2}><path d="m2.500 5 6 7 6-7" /></Icon>
                        </ScrollButton>
                      </ScrollTrack>
                      <ScrollTrack>
                        <ScrollButton aria-label="Scroll left">
                          <Icon size={17} box="0 0 17 17" stroke={2}><path d="m13 2.500-9 6 9 6" /></Icon>
                        </ScrollButton>
                        <ScrollThumb />
                        <ScrollButton aria-label="Scroll right">
                          <Icon size={17} box="0 0 17 17" stroke={2}><path d="m4 2.500 9 6-9 6" /></Icon>
                        </ScrollButton>
                      </ScrollTrack>
                    </TableCard>
                  </Report>
                </Canvas>

                <FiltersPane>
                  <FiltersHead>
                    <Icon size={18} box="0 0 18 18" stroke={2}><path d="M1 3h16M4.500 9h9M7.500 15h3" /></Icon>
                    <PaneTitle>Filters</PaneTitle>
                    <button aria-label="Collapse filters">
                      <Icon size={14} box="0 0 14 14" stroke={1.5}><path d="m2 1 5 6-5 6M7.500 1l5 6-5 6" /></Icon>
                    </button>
                  </FiltersHead>
                  <FilterSearch>
                    <SearchIcon />
                    <BareInput placeholder="Search" aria-label="Search filters" />
                  </FilterSearch>
                  <FilterNote>There aren't any filters to display.</FilterNote>
                </FiltersPane>
              </Split>
            </Center>
          </Main>

          <StatusBar>
            <ZoomStep aria-label="Zoom out">
              <Icon size={10} width={8} box="0 0 8 10" stroke={2.5}><path d="M1 5h6" strokeLinecap="butt" /></Icon>
            </ZoomStep>
            <ZoomRange type="range" min={0} max={100} defaultValue={59} aria-label="Zoom" />
            <ZoomStep aria-label="Zoom in">
              <Icon size={12} box="0 0 12 12" stroke={2.5}><path d="M6 1v10M1 6h10" strokeLinecap="butt" /></Icon>
            </ZoomStep>
            <ZoomValue>156%</ZoomValue>
            <button aria-label="Fit to page">
              <Icon size={15} width={20} box="0 0 20 15" stroke={1.5}>
                <rect x="1" y="1" width="18" height="13" rx="2" />
                <path d="M4 6V4.500h2M14 4.500h2V6M4 9v1.500h2M14 10.500h2V9" />
              </Icon>
            </button>
          </StatusBar>
        </Workspace>
      </Body>
    </Shell>
  );
}
